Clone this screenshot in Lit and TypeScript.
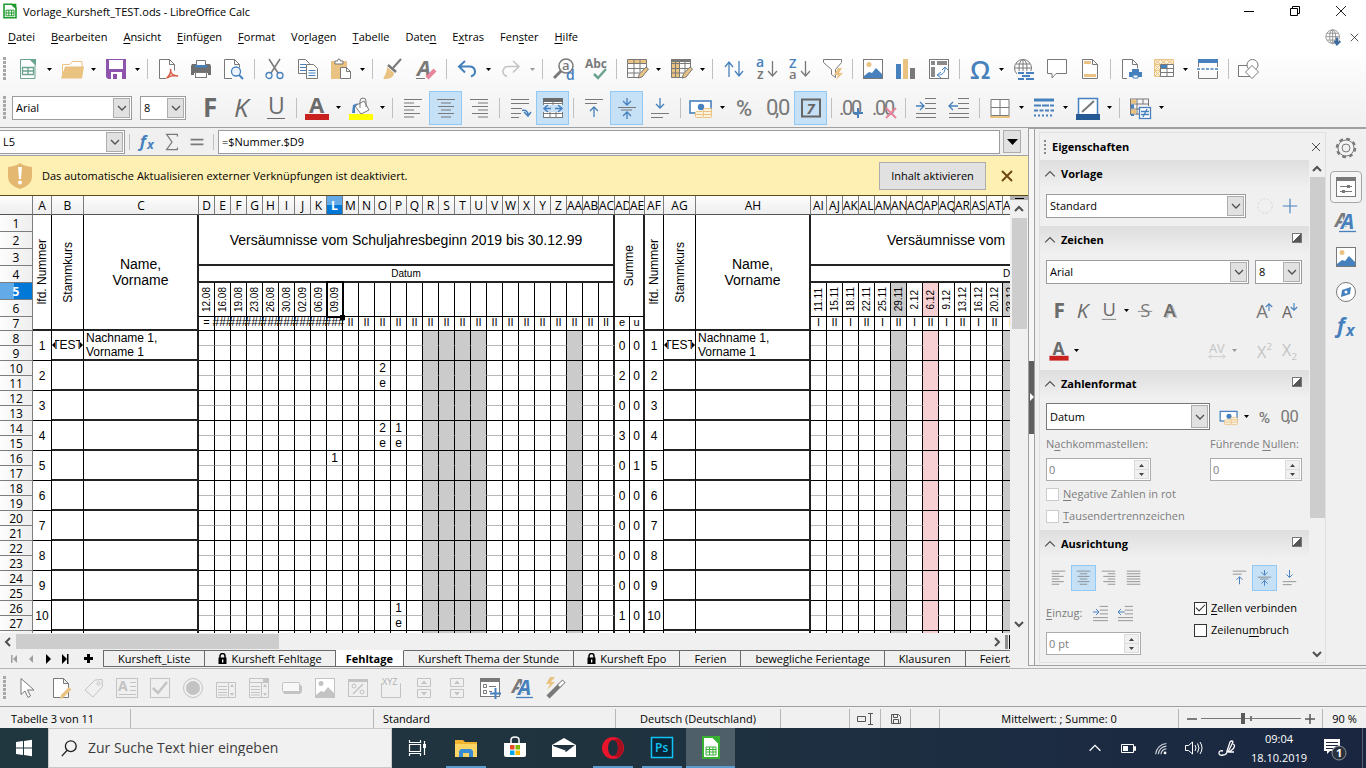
import { LitElement, html, svg, css, nothing } from "lit";
import { customElement, property } from "lit/decorators.js";
import { classMap } from "lit/directives/class-map.js";

const G = "#797979";
const B = "#4680bd";
const T = "#eac282";
const L = "#c3c3c3";

const lines = (ws: number[][], y0: number, step: number, c = G) =>
  ws.map(([a, b], i) => svg`<path d="M${a} ${y0 + i * step + 0.5}H${b}" stroke=${c}/>`);

const A = [[1, 19], [1, 11], [1, 17], [1, 11], [1, 17], [1, 11]];
const C = [[1, 19], [5, 15], [2, 18], [5, 15], [2, 18], [5, 15]];
const R = [[1, 19], [9, 19], [3, 19], [9, 19], [3, 19], [9, 19]];
const J = [[1, 19], [1, 19], [1, 19], [1, 19], [1, 19], [1, 19]];

const fancyA = svg`<g font-family="Open Sans, sans-serif" font-style="italic" font-weight="700"><text x="-1" y="15" font-size="20" fill=${G}>A</text><text x="5" y="17" font-size="21" fill="#f0f0f0" stroke="#f0f0f0" stroke-width="2">A</text><text x="5" y="17" font-size="21" fill=${B}>A</text></g><path d="M3 19.500H20" stroke=${B} stroke-width="1.300"/>`;
const picture = (g: string, b: string, t: string) => svg`<rect x=".5" y=".5" width="19" height="19" fill="#fff" stroke=${g}/><circle cx="6" cy="5.500" r="2.500" fill=${t}/><path d="M1 19V17l5-4 3 1 4-5 6 6v4z" fill=${b}/>`;
const money = svg`<rect x="-1" y="3" width="21" height="12" fill="#fff" stroke=${B} stroke-width="1.600"/><circle cx="10" cy="9" r="3.200" fill=${B}/><g fill="#fbf0dc" stroke=${T}><rect x="12.500" y="10.500" width="8" height="9" rx="1"/><rect x="4.500" y="13.500" width="8" height="6" rx="1"/><path d="M13 13.500h7M13 16.500h7M5 16.500h7" /></g>`;

const ICONS: Record<string, unknown> = {
  new: svg`<path d="M2.500.5H12l5 5V19.500H2.500z" fill="#fff" stroke="#6aa391"/><path d="M11.500 0H18v6.500z" fill="#6aa391"/><path d="M4.500 8.500h11v7h-11zM4.500 12h11M10 8.500v7" fill="none" stroke="#6aa391" stroke-width="1.300"/>`,
  open: svg`<path d="M.5 18V5.500h7l3-3h9.500v6" fill="#fff" stroke=${T}/><path d="M-1 19.500L3 7.500h19l-2 12z" fill=${T}/>`,
  save: svg`<path d="M0 0h20v20H2l-2-2z" fill="#8e54ac"/><rect x="3" y="1" width="14" height="9" fill="#fff"/><path d="M5 20v-7h11v7z" fill="#fff"/><path d="M7 15h4v5H7z" fill="#8e54ac"/>`,
  pdf: svg`<path d="M8 19.500H1.500V.5h10l5 5v6M11.500.5v5h5" fill="#fff" stroke=${G}/><path d="M8.500 19c3-2 5-6 4-9 0 5 2 7 7.500 7-4-1-8 0-11.500 2z" fill="none" stroke="#d85a46" stroke-width="1.500"/>`,
  print: svg`<path d="M5.500 8V1.500h9V8" fill="#fff" stroke=${G}/><path d="M1 5h4v3h10V5h4l1 2v9h-3v-2H3v2H0V7z" fill="#6f6f6f"/><path d="M4 6h12v2.500H4z" fill=${B}/><rect x="4.500" y="13.500" width="11" height="5" fill="#fff" stroke=${G}/>`,
  preview: svg`<path d="M8 19.500H.5V.5h10l5 5v3M10.500.5v5h5" fill="#fff" stroke=${G}/><circle cx="12" cy="12.500" r="4.500" fill="#eef4fb" stroke=${B} stroke-width="1.300"/><path d="M15 16l4 4" stroke=${B} stroke-width="2"/>`,
  cut: svg`<path d="M4 0l9 14M15 0L6 14" stroke=${G} stroke-width="1.500"/><circle cx="4" cy="16.500" r="3" fill="none" stroke=${B} stroke-width="1.300"/><circle cx="15" cy="16.500" r="3" fill="none" stroke=${B} stroke-width="1.300"/>`,
  copy: svg`<path d="M.5.5h7l4 4v10H.5z" fill="#fff" stroke=${G}/><path d="M2 5.500h6M2 8.500h6M2 11.500h6" stroke=${B}/><path d="M8.500 5.500h7l4 4v10h-11z" fill="#fff" stroke=${G}/><path d="M10.500 11.500h7M10.500 14h7M10.500 16.500h7" stroke=${B}/>`,
  paste: svg`<rect x="0" y="2" width="16" height="18" fill=${T}/><path d="M4 5V2h2.500a1.500 2 0 013 0H12v3z" fill="#fff" stroke=${G}/><path d="M9.500 8.500h6l4 4v7h-10z" fill="#fff" stroke=${G}/><path d="M15.500 8.500v4h4" fill="none" stroke=${G}/>`,
  brush: svg`<path d="M18 0l-8 9" stroke=${G} stroke-width="2"/><path d="M5 6l8 7" stroke=${G} stroke-width="2.500"/><path d="M4 8l7 6c0 4-4 6-10 6-2-1 3-4 3-12z" fill=${T}/>`,
  clear: svg`<text x="1" y="17" font-family="Open Sans, sans-serif" font-style="italic" font-weight="700" font-size="22" fill=${G}>A</text><path d="M0 19.500h9" stroke=${G}/><path d="M11 19l8-8" stroke="#e8849b" stroke-width="4"/>`,
  undo: svg`<path d="M8 2L2 7.500l6 6M2 7.500h11a5 5 0 013 9l-2 1" fill="none" stroke=${B} stroke-width="2"/>`,
  redo: svg`<path d="M12 2l6 5.500-6 6M18 7.500H7a5 5 0 00-3 9l2 1" fill="none" stroke=${L} stroke-width="1.500"/>`,
  find: svg`<circle cx="13" cy="7" r="7" fill="none" stroke=${G} stroke-width="1.500"/><path d="M8 12l-7 7" stroke=${G} stroke-width="3"/><g font-family="Open Sans, sans-serif" font-weight="600"><text x="9" y="11" font-size="13" fill=${G}>a</text><text x="13" y="21" font-size="14" fill=${B}>d</text></g>`,
  abc: svg`<text x="-1" y="9" font-family="Open Sans, sans-serif" font-weight="700" font-size="12" fill=${G}>Abc</text><path d="M8 15l4 4 8-9" fill="none" stroke="#6aa391" stroke-width="2.500"/>`,
  rows: svg`<path d="M.5.5h19v4H.5z" fill=${T} stroke=${G}/><path d="M.5 4.500v14h12M19.500 4.500v5M.5 9.500h18M.5 14h13M7 .5v18M13 .5v13" fill="none" stroke=${G}/><path d="M11 19l1.500-4L19 8l2.500 2-6.500 8z" fill=${T} stroke=${G}/>`,
  cols: svg`<path d="M.5.5h8v18h-8z" fill=${T} stroke=${G}/><path d="M8.500.5h11v9M.5 4.500h19M.5 9.500h18M.5 14h13M4.500.5v18M14 .5v13M8.500 18.500h4" fill="none" stroke=${G}/><path d="M0 0h20v3H0z" fill=${G}/><path d="M11 19l1.500-4L19 8l2.500 2-6.500 8z" fill=${T} stroke=${G}/>`,
  sort: svg`<path d="M6 18V3M2 8l4-5 4 5M16 2v15M12 12l4 5 4-5" fill="none" stroke=${B} stroke-width="1.300"/>`,
  az: svg`<g font-family="Open Sans, sans-serif" font-size="14" font-weight="600"><text x="0" y="8" fill=${B}>a</text><text x="1" y="20" fill=${G}>z</text></g><path d="M16.500 2v15M12 12l4.500 5 4.500-5" fill="none" stroke=${G} stroke-width="1.300"/>`,
  za: svg`<g font-family="Open Sans, sans-serif" font-size="13" font-weight="600"><text x="0" y="9" fill=${B}>Z</text><text x="0" y="20" fill=${G}>a</text></g><path d="M16.500 2v15M12 12l4.500 5 4.500-5" fill="none" stroke=${G} stroke-width="1.300"/>`,
  filter: svg`<path d="M1.500.5h18v3l-6 7v8l-4-3v-5l-8-7z" fill="#fff" stroke=${G}/><path d="M16 9l-4 7h4l-2 5 7-7h-4l3-5z" fill=${T}/>`,
  image: picture(G, B, T),
  chart: svg`<path d="M0 5h5v15H0z" fill=${B}/><path d="M7 0h5v20H7z" fill=${T}/><path d="M14 9h5v11h-5z" fill=${G}/>`,
  pivot: svg`<rect x=".5" y=".5" width="19" height="19" fill="#fff" stroke=${G}/><path d="M2 2h4v4H2zM8 2h10v4H8zM2 8h4v10H2z" fill="#8a8a8a"/><path d="M9 16c4 0 7-2 7-7M13 11l3-3 3 3M12 13l-4 3 4 3" fill="none" stroke=${B}/>`,
  omega: svg`<text x="0" y="20" font-family="Open Sans, sans-serif" font-weight="600" font-size="26" fill=${B}>Ω</text>`,
  link: svg`<circle cx="9" cy="9" r="8.500" fill="#fff" stroke=${G}/><ellipse cx="9" cy="9" rx="4" ry="8.500" fill="none" stroke=${G}/><path d="M1 9h16M2 5h14M9 1v12" stroke=${G}/><path d="M3 12h18v8H3z" fill="#f6f6f6"/><path d="M4 14h6M12 14h8M8 17h8M4 20h6M12 20h8" stroke=${B} stroke-width="2"/>`,
  comment: svg`<path d="M.5.5h19v14H9l-4 4.500v-4.500H.5z" fill="#fff" stroke=${G}/>`,
  header: svg`<path d="M2.500.5h10l5 5v14h-15zM12.500.5v5h5" fill="#fff" stroke=${G}/><path d="M4 2h7v3H4zM4 15h12v3H4z" fill=${T}/>`,
  printarea: svg`<path d="M6 19.500H1.500V.5h10l5 5v4M11.500.5v5h5" fill="#fff" stroke=${G}/><path d="M11 10h7v3h3v5H8v-5h3z" fill=${B}/><path d="M12 16h5v3h-5z" fill="#fff" stroke=${B}/>`,
  freeze: svg`<path d="M.5.5h19v5h-13v12h-6z" fill="#fdf0d8" stroke=${T}/><path d="M1 1l5 4M6 1L1 5M7 1l5 4M12 1L7 5M13 1l6 4M18 1l-5 4M1 6l5 5M6 6l-5 5M1 12l5 5M6 12l-5 5M.5 5.500h6M.5 11.500h6" stroke=${T}/><path d="M6.500 5.500h13v12h-13zM13 5.500v12M6.500 9.500h13M6.500 13.500h13" fill="#fff" stroke=${G}/><path d="M7 6h6v3H7z" fill=${B}/>`,
  split: svg`<path d="M0 0h20v4H0z" fill=${B}/><path d="M.5 4v4M19.500 4v4M.5 8M.5 12v7.500h19V12" fill="none" stroke=${G}/><path d="M-1 10h22" stroke=${B} stroke-width="1.300" stroke-dasharray="3 1.500"/>`,
  shapes: svg`<rect x="-.5" y="6.500" width="12" height="11" fill="#fff" stroke=${G}/><circle cx="13.500" cy="6" r="5.500" fill="#fff" stroke=${G}/><path d="M13 6.500l6.500 6.500-6.500 6.500L6.500 13z" fill="#fff" stroke=${G}/>`,
  bold: svg`<text x="3" y="19" font-family="Open Sans, sans-serif" font-weight="700" font-size="26" fill="#6b6b6b">F</text>`,
  italic: svg`<text x="1" y="19" font-family="Open Sans, sans-serif" font-style="italic" font-size="26" fill="#6b6b6b">K</text>`,
  underline: svg`<text x="2" y="16" font-family="Open Sans, sans-serif" font-size="23" fill="#6b6b6b">U</text><path d="M1 20.500h18" stroke="#6b6b6b"/>`,
  strike: svg`<text x="4" y="18" font-family="Open Sans, sans-serif" font-size="23" fill="#7b7b7b">S</text><path d="M1 10.500h18" stroke="#7b7b7b"/>`,
  shadow: svg`<text x="4" y="19" font-family="Open Sans, sans-serif" font-weight="600" font-size="23" fill="#bbb">A</text><text x="2" y="18" font-family="Open Sans, sans-serif" font-weight="600" font-size="23" fill="#6b6b6b">A</text>`,
  fontcolor: svg`<text x="2" y="15" font-family="Open Sans, sans-serif" font-weight="700" font-size="22" fill="#6b6b6b">A</text><path d="M-2 16h24v6H-2z" fill="#c9211e"/>`,
  bucket: svg`<path d="M4 8l9-5 5 9-8 4z" fill="#fff" stroke=${G}/><path d="M9 10V3a3 3 0 016 0v6" fill="none" stroke=${G}/><path d="M2 7l5-2-3 4v6H1z" fill=${B}/><path d="M-2 16h24v6H-2z" fill="#ff0"/>`,
  left: lines(A, 1, 3.5), center: lines(C, 1, 3.5), right: lines(R, 1, 3.5), justify: lines(J, 1, 3.5),
  wrap: svg`<path d="M1 1.500h18M1 5.500h18M1 10.500h11M1 15.500h10M1 19.500h8" stroke=${G}/><path d="M12 12.500c4-1 6 1 6 5M14 14l4 4 3-4" fill="none" stroke=${B} stroke-width="1.500"/>`,
  merge: svg`<rect x=".5" y=".5" width="19" height="19" fill="#fff" stroke=${G}/><path d="M0 0h20v4H0z" fill="#6b6b6b"/><path d="M0 5.500h20M0 15.500h20M10 4v3M7 14v5M13 14v5" stroke=${G}/><path d="M0 7h20v7H0z" fill="#c7e0f5"/><path d="M1 10.500h7M12 10.500h7M5 7l-4 3.500L5 14M15 7l4 3.500-4 3.500" fill="none" stroke=${B} stroke-width="1.500"/>`,
  top: svg`<path d="M1 1.500h18M1 5.500h12" stroke=${G}/><path d="M10 19V9M6 13l4-4 4 4" fill="none" stroke=${B} stroke-width="1.300"/>`,
  middle: svg`<path d="M1 9.500h18M4 12h11" stroke=${G}/><path d="M10 0v7M6 3l4 4 4-4M10 21v-7M6 18l4-4 4 4" fill="none" stroke=${B} stroke-width="1.300"/>`,
  bottom: svg`<path d="M1 15.500h18M1 19.500h12" stroke=${G}/><path d="M10 0v10M6 6l4 4 4-4" fill="none" stroke=${B} stroke-width="1.300"/>`,
  money,
  percent: svg`<text x="1" y="18" font-family="Roboto, sans-serif" font-weight="500" font-size="22" fill=${G}>%</text>`,
  number: svg`<text x="-2 7 10" y="17" font-family="Roboto, sans-serif" font-size="22" fill=${G}>0,0</text>`,
  date: svg`<rect x="1" y="1.500" width="18" height="17" fill="none" stroke="#666" stroke-width="2"/><text x="5.500" y="15.500" font-family="Open Sans, sans-serif" font-weight="700" font-style="italic" font-size="15" fill="#666">7</text>`,
  adddec: svg`<text x="-3 0 9" y="17" font-family="Roboto, sans-serif" font-size="20" fill=${G}>.00</text><path d="M16 10v10M11 15h10" stroke=${B} stroke-width="2"/>`,
  deldec: svg`<text x="-3 0 9" y="17" font-family="Roboto, sans-serif" font-size="20" fill=${G}>.00</text><path d="M11 10l10 10M21 10L11 20" stroke="#e8849b" stroke-width="2"/>`,
  indent: svg`<path d="M9 .5h11M9 5.500h11M9 10.500h11M0 15.500h20M0 19.500h20" stroke=${G}/><path d="M0 8h8M4 4l4 4-4 4" fill="none" stroke=${B} stroke-width="1.300"/>`,
  outdent: svg`<path d="M9 .5h11M9 5.500h11M9 10.500h11M0 15.500h20M0 19.500h20" stroke=${G}/><path d="M0 8h9M4 4L0 8l4 4" fill="none" stroke=${B} stroke-width="1.300"/>`,
  borders: svg`<path d="M1 1.500h18v16H1zM10 1.500v16M1 9.500h18" fill="#fff" stroke=${G}/><path d="M0 19h20" stroke=${T} stroke-width="2"/>`,
  linestyle: svg`<path d="M0 2h20" stroke=${B} stroke-width="3"/><path d="M0 7.500h20" stroke=${B} stroke-width="2" stroke-dasharray="7 1"/><path d="M0 12.500h20" stroke=${B} stroke-width="2" stroke-dasharray="4 1.500"/><path d="M0 17.500h20" stroke=${B} stroke-width="2" stroke-dasharray="2 2"/>`,
  linecolor: svg`<rect x=".5" y=".5" width="19" height="17" fill="#fff" stroke=${B} stroke-width="1.500"/><path d="M4 14L16 3" stroke=${G} stroke-width="2"/><path d="M-2 16h24v6H-2z" fill="#265a94"/>`,
  cond: svg`<path d="M0 1h19M0 6h19M0 11h9M0 16h9M.5 1v16M7 1v16M13 1v5M18.500 1v7" stroke=${G}/><path d="M1 1.500h5v4H1zM1 11.500h5v4H1z" fill=${T}/><path d="M1 6.500h3v4H1zM1 16h3v2H1z" fill=${B}/><rect x="9.500" y="9.500" width="11" height="11" fill="#fff" stroke=${B} stroke-width="1.300"/><path d="M11 13.500h8M11 16.500h8M17 11l-4 8" stroke=${B} stroke-width="1.300"/>`,
  // form controls
  pointer: svg`<path d="M3 .5v16l4-3.500 3 6.500 2.500-1.500-3-6H16z" fill="#fff" stroke=${G}/>`,
  design: svg`<path d="M2.500.5h10l5 5v14h-15zM12.500.5v5h5" fill="#fff" stroke=${G}/><path d="M9 21l1-4 8-8 2.500 2.500-8 8z" fill=${T}/>`,
  tag: svg`<path d="M1 12L11 2l7-.5.5 7L9 19z" fill="none" stroke=${L}/><circle cx="14.500" cy="5.500" r="1.500" fill="none" stroke=${L}/>`,
  textbox: svg`<rect x="-.5" y=".5" width="21" height="19" fill="none" stroke=${L}/><text x="1" y="13" font-family="Open Sans, sans-serif" font-weight="700" font-size="14" fill=${L}>A</text><path d="M13 4.500h6M13 8.500h6M13 12.500h6M2 16.500h17" stroke=${L}/>`,
  check: svg`<rect x=".5" y=".5" width="19" height="19" fill="none" stroke=${L}/><path d="M3 10l5 5L17 4" fill="none" stroke=${L} stroke-width="2.500"/>`,
  radio: svg`<circle cx="10" cy="10" r="9.500" fill="none" stroke=${L}/><circle cx="10" cy="10" r="7" fill=${L}/>`,
  list: svg`<path d="M.5 4.500h19v15H.5zM12.500 4.500v15M2 8.500h9M2 11.500h9M2 14.500h9M2 17h9" fill="none" stroke=${L}/><path d="M14 9h4l-2-3zM14 15h4l-2 3z" fill=${L}/>`,
  combo: svg`<path d="M.5.5h19v4H.5zM.5 4.500v15h19v-15M12.500 4.500v15M2 8.500h9M2 11.500h9M2 14.500h9M2 17h9" fill="none" stroke=${L}/><path d="M14 0h6v4h-6zM14 9h4l-2-3zM14 15h4l-2 3z" fill=${L}/>`,
  push: svg`<path d="M2 6h15l3 2v6l-2 2H2l-1-2z" fill=${L}/><rect x=".5" y="4.500" width="17" height="9" rx="1" fill="#f7f7f7" stroke=${L}/>`,
  imgbtn: picture(L, L, L),
  format: svg`<rect x=".5" y="1.500" width="19" height="17" fill="none" stroke=${L}/><path d="M0 1h20v3H0z" fill=${L}/><path d="M5 16l10-10" stroke=${L} stroke-width="1.500"/><circle cx="6" cy="8" r="2" fill="none" stroke=${L}/><circle cx="14" cy="14" r="2" fill="none" stroke=${L}/>`,
  group: svg`<path d="M1 5.500H.5v14h19v-14H19" fill="none" stroke=${L}/><text x="1" y="7" font-family="Open Sans, sans-serif" font-size="9" fill="#b0b0b0">XYZ</text>`,
  spin: svg`<path d="M3.500.5h13v8h-13zM3.500 11.500h13v8h-13z" fill="none" stroke=${L}/><path d="M7 6h6l-3-3.500zM7 14h6l-3 3.500z" fill=${L}/>`,
  scroll: svg`<path d="M3.500.5h13v8h-13zM3.500 11.500h13v8h-13z" fill="none" stroke=${L}/><path d="M7 6h6l-3-3.500zM7 14h6l-3 3.500z" fill=${L}/>`,
  addfield: svg`<rect x=".5" y="1.500" width="19" height="17" fill="#fff" stroke=${G}/><path d="M0 0h20v4H0z" fill=${G}/><path d="M3.500 6.500h3v3h-3zM3.500 12.500h3v3h-3zM9 8.500h7M9 13.500h3" fill="none" stroke=${G}/><path d="M15.500 10v11M10 15.500h11" stroke=${B} stroke-width="2"/>`,
  styles: fancyA,
  wizard: svg`<path d="M4-1L0 6h4l-3 6 8-8H5l4-5z" fill=${T}/><path d="M2 19L14 7" stroke=${G} stroke-width="4.500"/><path d="M13 8l5-5" stroke=${G} stroke-width="4.500"/><path d="M13 8l4.500-4.500" stroke="#fff" stroke-width="2.500"/>`,
  // sidebar
  grow: svg`<text x="-1" y="19" font-family="Open Sans, sans-serif" font-size="23" fill=${G}>A</text><path d="M15 10V1M11 5l4-4 4 4" fill="none" stroke=${B} stroke-width="1.400"/>`,
  shrink: svg`<text x="0" y="19" font-family="Open Sans, sans-serif" font-size="20" fill="#666">A</text><path d="M15 0v8M11 5l4 4 4-4" fill="none" stroke=${B} stroke-width="1.400"/>`,
  spacing: svg`<text x="0" y="13" font-family="Open Sans, sans-serif" font-size="16" fill=${L}>AV</text><path d="M0 17h20M3 14l-3 3 3 3M17 14l3 3-3 3" fill="none" stroke=${L}/>`,
  sup: svg`<text x="0" y="19" font-family="Open Sans, sans-serif" font-size="20" fill=${L}>X</text><text x="12" y="9" font-family="Open Sans, sans-serif" font-size="12" fill=${L}>2</text>`,
  sub: svg`<text x="0" y="16" font-family="Open Sans, sans-serif" font-size="20" fill=${L}>X</text><text x="12" y="21" font-family="Open Sans, sans-serif" font-size="12" fill=${L}>2</text>`,
  fill: svg`<circle cx="10" cy="10" r="9" fill="none" stroke="#cfcfcf" stroke-dasharray="3 2"/>`,
  plus: svg`<path d="M10 1v18M1 10h18" stroke=${B} stroke-width="1.400"/>`,
  gear: svg`<circle cx="10" cy="10" r="9" fill="none" stroke=${G} stroke-width="2.500" stroke-dasharray="3.700 3.368"/><circle cx="10" cy="10" r="8" fill="#f4f4f4" stroke=${G}/><circle cx="10" cy="10" r="4" fill="#f0f0f0" stroke=${G}/>`,
  props: svg`<rect x=".5" y=".5" width="19" height="19" fill="#fff" stroke=${G}/><path d="M0 0h20v4H0z" fill=${G}/><path d="M4 9.500h12M4 14.500h12" stroke=${G}/><path d="M11 8h3v3h-3zM6 13h3v3H6z" fill=${G}/>`,
  compass: svg`<circle cx="10" cy="10" r="9.500" fill="#fff" stroke=${G}/><path d="M6 8l9-3-1 7-9 3z" fill=${B}/><circle cx="10" cy="10" r="1.500" fill="#fff"/>`,
  fx: svg`<text x="1" y="16" font-family="Open Sans, sans-serif" font-style="italic" font-weight="700" font-size="21" fill=${B}>f</text><text x="10" y="19" font-family="Open Sans, sans-serif" font-style="italic" font-weight="700" font-size="16" fill=${B}>x</text>`,
  sum: svg`<path d="M16 4V1.500H4l6 8.500-6 8.500h12V16" fill="none" stroke=${G} stroke-width="1.400"/>`,
  equals: svg`<path d="M2 7h16M2 13h16" stroke=${G} stroke-width="2"/>`,
  sheet: svg`<path d="M2.500 1.500H12l5.500 5v12h-15z" fill="#fff" stroke="#1d9b2c" stroke-width="2"/><path d="M11.500 1L18 1v6z" fill="#1d9b2c"/><path d="M5 9h10v7H5zM5 12.500h10M8.500 9v7M12 9v7" fill="none" stroke="#1d9b2c" stroke-width="1.200"/>`,
  globe: svg`<circle cx="9" cy="9" r="8" fill="#fff" stroke="#8a8a8a"/><ellipse cx="9" cy="9" rx="3.500" ry="8" fill="none" stroke="#8a8a8a"/><path d="M1 9h16M2.500 5h13M2.500 13h13M9 1v16" stroke="#8a8a8a"/><path d="M14 10v7M11 14l3 4 4-4" fill="none" stroke="#3c6a9c" stroke-width="2.500"/>`,
  min: svg`<path d="M5 10.500h10" stroke="#000"/>`,
  restore: svg`<path d="M5.500 7.500h7v7h-7zM7.500 7.500v-2h7v7h-2" fill="none" stroke="#000"/>`,
  close: svg`<path d="M5 5l10 10M15 5L5 15" stroke="#222"/>`,
  shield: svg`<path d="M-2 1Q6 0 10-3q4 3 12 4v10q0 8-12 12Q-2 19-2 11z" fill="#e5b872"/><path d="M8 1h4l-1 12H9z" fill="#fff"/><circle cx="10" cy="16.500" r="2" fill="#fff"/>`,
  // taskbar
  win: svg`<path d="M2 4l7-1v6.500H2zM10 3l8-1.200v7.700h-8zM2 10.500h7V17l-7-1zM10 10.500h8v7.700L10 17z" fill="#fff"/>`,
  search: svg`<circle cx="12" cy="8" r="6" fill="none" stroke="#222" stroke-width="1.500"/><path d="M8 12.500L2 19" stroke="#222" stroke-width="1.500"/>`,
  tasks: svg`<path d="M2.500 6.500h11v7h-11zM2.500 2v2.500h11V2M2.500 18v-2.500h11V18M17.500 3v14" fill="none" stroke="#fff" stroke-width="1.200"/><path d="M16 6h3v4h-3z" fill="#fff"/>`,
  explorer: svg`<path d="M-1 2h8l2 2h12v15H-1z" fill="#f0b430"/><path d="M-1 6h22v13H-1z" fill="#fbd665"/><path d="M3 19v-6l2-2h10l2 2v6h-4v-4H7v4z" fill="#3a8bd6"/>`,
  store: svg`<path d="M-1 5h22v12q0 2-2 2H1q-2 0-2-2z" fill="#fff"/><path d="M6 5V2q0-3 4-3t4 3v3" fill="none" stroke="#fff" stroke-width="1.500"/><path d="M5 7h4.500v4.500H5z" fill="#e84b25"/><path d="M10.500 7H15v4.500h-4.500z" fill="#7fba00"/><path d="M5 12.500h4.500V17H5z" fill="#00a4ef"/><path d="M10.500 12.500H15V17h-4.500z" fill="#ffb900"/>`,
  mail: svg`<path d="M-2 7L10 0l12 7v12H-2z" fill="#fff"/><path d="M-1 7l22 0-9 7-2-2-11-4z" fill="#1f333f"/><path d="M-1 7.500L9 13l3-1.500L10 14z" fill="#fff"/>`,
  opera: svg`<ellipse cx="10" cy="10" rx="11" ry="11" fill="#e8152b"/><ellipse cx="10" cy="10" rx="5" ry="8" fill="#1f303d"/><path d="M17 2a11 11 0 010 16q-3 2-6 0 4-2 4-8t-4-8q3-2 6 0z" fill="#a70f1f"/>`,
  ps: svg`<rect x="-.5" y="-.5" width="21" height="20" fill="#0a2536" stroke="#12c4f5" stroke-width="1.500"/><text x="3" y="14" font-family="Open Sans, sans-serif" font-weight="600" font-size="12" fill="#12c4f5">Ps</text>`,
  calc: svg`<path d="M2-1h10l6 6v15H2z" fill="#fff" stroke="#37b034" stroke-width="2"/><path d="M12-2h7v7z" fill="#37b034"/><path d="M5 9h10v8H5zM5 11.500h10M5 14h10M8.500 9v8M12 9v8" fill="none" stroke="#37b034"/>`,
  up: svg`<path d="M4 13l6-6 6 6" fill="none" stroke="#fff" stroke-width="1.400"/>`,
  battery: svg`<path d="M3.500 6.500h12v8h-12zM16.500 8.500h1v4h-1z" fill="none" stroke="#fff"/><path d="M5 8h5v5H5z" fill="#fff"/>`,
  wifi: svg`<path d="M4 17A13 13 0 0116 5M7 17a9.500 9.500 0 019-9M10 17a6 6 0 016-6" fill="none" stroke="#cdd3d9" stroke-width="1.300"/><circle cx="14.500" cy="15.500" r="1.500" fill="#fff"/>`,
  volume: svg`<path d="M1.500 7.500h3l4-3.500v12l-4-3.500h-3z" fill="none" stroke="#fff"/><path d="M11 7q2 3 0 6M13.500 5.500q3 4.500 0 9M16 4q4 6 0 12" fill="none" stroke="#fff"/>`,
  pen: svg`<path d="M6 13q-4-1-4 2t4 2q4 0 4-4L13 4q2-2 3 0l-5 10M16 6q3 1 0 5l-4 3h5" fill="none" stroke="#fff" stroke-width="1.300"/>`,
  note: svg`<path d="M1 1h16v12H7l-3 3v-3H1z" fill="#fff"/><path d="M3 4.500h12M3 7.500h12M3 10.500h7" stroke="#1b2940"/><circle cx="16" cy="15" r="7" fill="#2a323e" stroke="#8b929b"/><text x="13" y="19" font-family="Open Sans, sans-serif" font-weight="700" font-size="11" fill="#fff">1</text>`,
};

const glyph = (name: string, size = 20) =>
  html`<svg class="ico" viewBox="0 0 20 20" width=${size} height=${size} aria-hidden="true">${ICONS[name]}</svg>`;

const arrow = (label: string, dim = false) =>
  html`<button class=${classMap({ drop: true, dim })} aria-label=${label + " – Auswahl"}><svg viewBox="0 0 5 3" width="5" height="3"><path d="M0 0h5L2.500 3z" fill="currentColor"/></svg></button>`;

const chevron = (rot = 0, size = 10, w = 1.3) =>
  html`<svg class="chev" viewBox="0 0 10 10" width=${size} height=${size}><path d="M1 3l4 4 4-4" transform="rotate(${rot} 5 5)" fill="none" stroke="#505050" stroke-width=${w}/></svg>`;

const base = css`
  :host { display: block; font-family: "Open Sans", "Noto Sans", sans-serif; font-size: 11px; line-height: 16px; color: #000; }
  * { box-sizing: border-box; }
  button, input, select { font: inherit; color: inherit; margin: 0; border-radius: 0; }
  button { border: 0; padding: 0; background: none; display: inline-flex; align-items: center; justify-content: center; }
  u { text-underline-offset: 2px; }
  .ico { display: block; overflow: visible; flex: none; }
  .chev { display: block; }
  .drop { width: 11px; align-self: stretch; color: #000; }
  .drop.dim { color: #999; }
  .combo { display: grid; align-items: stretch; background: #fff; border: 1px solid #9c9ca0; }
  .combo > * { grid-area: 1 / 1; }
  .combo select { appearance: none; border: 0; background: none; padding: 0 20px 0 3px; width: 100%; outline: 0; min-width: 0; }
  .combo .cb { justify-self: end; width: 17px; margin: 1px; background: #e1e1e1; border: 1px solid #adadad; display: flex; align-items: center; justify-content: center; pointer-events: none; }
`;

const combo = (label: string, value: string, cls: string) => html`
  <span class="combo ${cls}"><select aria-label=${label}><option>${value}</option></select><span class="cb">${chevron()}</span></span>`;

type Tool = [string, string, string?] | "|";

@customElement("tool-bar")
class ToolBar extends LitElement {
  @property({ attribute: false }) items: Tool[] = [];
  static styles = [base, css`
    :host { display: flex; align-items: center; min-width: 0; }
    .btn { width: 33px; height: 34px; border: 1px solid transparent; flex: none; }
    .btn.on { background: #c6e0f6; border-color: #90c8f6; }
    .drop { align-self: auto; height: 34px; flex: none; }
    .sep { width: 8px; display: flex; justify-content: center; flex: none; }
    .sep::before { content: ""; width: 1px; height: 20px; background: #c0c0c0; }
  `];
  render() {
    return this.items.map((t) => t === "|"
      ? html`<span class="sep"></span>`
      : html`<button class=${classMap({ btn: true, on: !!t[2]?.includes("on") })} aria-label=${t[1]} title=${t[1]}>${glyph(t[0])}</button>${t[2]?.includes("v") ? arrow(t[1], t[2].includes("dim")) : nothing}`);
  }
}

const STANDARD: Tool[] = [
  ["new", "Neu", "v"], ["open", "Öffnen", "v"], ["save", "Speichern", "v"], "|",
  ["pdf", "Als PDF exportieren"], ["print", "Drucken"], ["preview", "Druckvorschau"], "|",
  ["cut", "Ausschneiden"], ["copy", "Kopieren"], ["paste", "Einfügen", "v"], "|",
  ["brush", "Format übertragen"], ["clear", "Direkte Formatierung löschen"], "|",
  ["undo", "Rückgängig", "v"], ["redo", "Wiederherstellen", "v dim"], "|",
  ["find", "Suchen und Ersetzen"], ["abc", "Rechtschreibung"], "|",
  ["rows", "Zeile", "v"], ["cols", "Spalte", "v"], "|",
  ["sort", "Sortieren"], ["az", "Aufsteigend sortieren"], ["za", "Absteigend sortieren"], ["filter", "AutoFilter"], "|",
  ["image", "Bild"], ["chart", "Diagramm"], ["pivot", "Pivot-Tabelle"], "|",
  ["omega", "Sonderzeichen", "v"], ["link", "Hyperlink"], ["comment", "Kommentar"], ["header", "Kopf- und Fußzeilen"], "|",
  ["printarea", "Druckbereich"], ["freeze", "Zeilen und Spalten fixieren", "v"], ["split", "Fenster teilen"], "|",
  ["shapes", "Zeichnungsfunktionen"],
];
const FORMAT: Tool[] = [
  ["bold", "Fett"], ["italic", "Kursiv"], ["underline", "Unterstrichen"], "|",
  ["fontcolor", "Schriftfarbe", "v"], ["bucket", "Hintergrundfarbe", "v"], "|",
  ["left", "Linksbündig"], ["center", "Zentriert", "on"], ["right", "Rechtsbündig"], "|",
  ["wrap", "Zeilenumbruch"], ["merge", "Zellen verbinden", "on"], "|",
  ["top", "Oben"], ["middle", "Mitte", "on"], ["bottom", "Unten"], "|",
  ["money", "Währung", "v"], ["percent", "Prozent"], ["number", "Zahl"], ["date", "Datum", "on"], "|",
  ["adddec", "Nachkommastelle hinzufügen"], ["deldec", "Nachkommastelle löschen"], "|",
  ["indent", "Einzug erhöhen"], ["outdent", "Einzug verringern"], "|",
  ["borders", "Umrandung", "v"], ["linestyle", "Rahmenstil", "v"], ["linecolor", "Rahmenfarbe", "v"], "|",
  ["cond", "Bedingte Formatierung", "v"],
];
const FORM: Tool[] = [
  ["pointer", "Auswahl"], ["design", "Entwurfsmodus"], ["tag", "Beschriftung"], ["textbox", "Textfeld"], ["check", "Markierfeld"],
  ["radio", "Optionsfeld"], ["list", "Listenfeld"], ["combo", "Kombinationsfeld"], ["push", "Schaltfläche"], ["imgbtn", "Grafische Schaltfläche"],
  ["format", "Formatiertes Feld"], ["group", "Gruppierungsrahmen"], ["spin", "Drehfeld"], ["scroll", "Bildlaufleiste"],
  ["addfield", "Feld hinzufügen"], ["styles", "Formularentwurf"], ["wizard", "Assistent"],
];

const colName = (i: number) => (i < 26 ? "" : "A") + String.fromCharCode(65 + (i % 26));
const colKind = (i: number) => {
  if (i === 0 || i === 31) return "c19";
  if (i === 1 || i === 32) return "c32";
  if (i === 2 || i === 33) return "c115";
  if (i === 29 || i === 30) return "c15";
  return "c16";
};
const COLS = Array.from({ length: 47 }, (_, i) => i);
const DATES1 = ["12.08", "16.08", "19.08", "23.08", "26.08", "30.08", "02.09", "06.09", "09.09"];
const DATES2 = ["11.11", "15.11", "18.11", "22.11", "25.11", "29.11", "2.12", "6.12", "9.12", "13.12", "16.12", "20.12", "23.12"];
const MARKS: Record<string, string> = { "10:14": "2", "11:14": "e", "14:14": "2", "15:14": "e", "14:15": "1", "15:15": "e", "16:11": "1", "26:15": "1", "27:15": "e" };
const SUMS = [[0, 0], [2, 0], [0, 0], [3, 0], [0, 1], [0, 0], [0, 0], [0, 0], [0, 0], [1, 0]];
const shade = (i: number) => ((i >= 17 && i <= 20) || i === 26 || i === 39 || i === 46 ? "grey" : i === 41 ? "pink" : "");

@customElement("calc-sheet")
class CalcSheet extends LitElement {
  static styles = [base, css`
    :host { display: block; overflow: hidden; background: #fff; min-width: 0; min-height: 0; }
    table { border-collapse: separate; border-spacing: 0; table-layout: fixed; width: 1019px; font-family: "Liberation Sans", Arial, sans-serif; font-size: 12px; line-height: 14px; }
    .h { width: 33px; } .c19 { width: 19px; } .c32 { width: 32px; } .c115 { width: 115px; } .c15 { width: 15px; } .c16 { width: 16px; }
    th, td { padding: 0; text-align: center; vertical-align: middle; white-space: nowrap; border: 0 solid #000; border-width: 0 1px 1px 0; }
    thead tr { height: 19px; }
    thead th, .rh { font-family: "Open Sans", "Noto Sans", sans-serif; font-weight: 400; background: #f3f3f3; border-color: #7d7d7d; overflow: hidden; line-height: 13px; }
    thead th { background: linear-gradient(#fdfdfd, #eee); border-bottom-color: #555; }
    .rh { background: linear-gradient(90deg, #fdfdfd, #eee); }
    thead .cur { background: linear-gradient(#62aae8 50%, #0078d7 50%); color: #fff; font-weight: 700; }
    .rh.cur { background: linear-gradient(90deg, #62aae8 45%, #0078d7 45%); color: #fff; font-weight: 700; }
    .r17 { height: 17px; } .r14 { height: 14px; } .r15 { height: 15px; }
    .tr { border-right-width: 2px; border-right-color: #222; }
    .tb { border-bottom-width: 2px; border-bottom-color: #222; }
    .soft { border-bottom-color: #b8b8b8; }
    .grey { background: #cbcbcb; } .pink { background: #f7d0d4; }
    .soft.grey { border-bottom-color: #cbcbcb; } .soft.pink { border-bottom-color: #f7d0d4; }
    .big { font-size: 14px; line-height: 16px; }
    .small { font-size: 10px; line-height: 12px; }
    .cut { text-align: left; padding-left: 76px; overflow: hidden; }
    .cut.small { padding-left: 192px; }
    .v { writing-mode: vertical-rl; transform: rotate(180deg); display: inline-block; vertical-align: middle; }
    .v.small { line-height: 12px; }
    .name { text-align: left; padding-left: 2px; }
    .mini { line-height: 10px; vertical-align: top; font-size: 11px; }
    .hash { font-size: 12px; overflow: visible; }
    .hash span { display: flex; justify-content: center; }
    .sel { position: relative; }
    .sel::before { content: ""; position: absolute; inset: -2px -2px -2px -1px; border: 2px solid #000; }
    .sel::after { content: ""; position: absolute; right: -3px; bottom: -4px; width: 5px; height: 5px; background: #000; }
    .clip { display: flex; justify-content: space-between; align-items: center; overflow: hidden; }
    .clip span { flex: 1; display: flex; justify-content: center; min-width: 0; overflow: hidden; }
    .tri { width: 3px; height: 6px; background: #000; clip-path: polygon(0 50%, 100% 0, 100% 100%); flex: none; }
    .tri.r { clip-path: polygon(0 0, 100% 50%, 0 100%); }
  `];
  private rh(n: number, cls: string) {
    return html`<th scope="row" class="rh ${cls} ${n === 5 ? "cur" : ""}">${n < 28 ? n : nothing}</th>`;
  }
  private head(side: number) {
    return html`
      <td rowspan="7" class="tb"><span class="v">lfd. Nummer</span></td>
      <td rowspan="7" class="tb"><span class="v">Stammkurs</span></td>
      <td rowspan="7" class="tb tr big">Name,<br />Vorname</td>
      ${side ? html`<td rowspan="3" colspan="13" class="tb big cut">Versäumnisse vom</td>`
        : html`<td rowspan="3" colspan="26" class="tb tr big">Versäumnisse vom Schuljahresbeginn 2019 bis 30.12.99</td><td rowspan="6" colspan="2" class="tr"><span class="v">Summe</span></td>`}`;
  }
  private top() {
    return html`
      <tr class="r17">${this.rh(1, "")}${this.head(0)}${this.head(1)}</tr>
      <tr class="r17">${this.rh(2, "")}</tr>
      <tr class="r17">${this.rh(3, "")}</tr>
      <tr class="r17">${this.rh(4, "")}<td colspan="26" class="small tb tr">Datum</td><td colspan="13" class="small tb cut">Datum</td></tr>
      <tr class="r17">${this.rh(5, "")}
        ${Array.from({ length: 26 }, (_, k) => html`<td rowspan="2" class="small ${k === 8 ? "sel" : ""} ${k === 25 ? "tr" : ""}">${DATES1[k] ? html`<span class="v small">${DATES1[k]}</span>` : nothing}</td>`)}
        ${DATES2.map((d, k) => html`<td rowspan="2" class="small ${shade(34 + k)}"><span class="v small">${d}</span></td>`)}
      </tr>
      <tr class="r17">${this.rh(6, "")}</tr>
      <tr class="r14">${this.rh(7, "")}
        ${Array.from({ length: 26 }, (_, k) => html`<td class="mini ${k > 0 && k < 9 ? "hash" : ""} ${k === 25 ? "tr" : ""}">${k === 0 ? "=" : k < 9 ? html`<span>###</span>` : "II"}</td>`)}
        <td class="mini">e</td><td class="mini tr">u</td>
        ${DATES2.map((_, k) => html`<td class="mini">${k % 2 ? "II" : "I"}</td>`)}
      </tr>`;
  }
  private cells(row: number, from: number, to: number, cls: string) {
    return COLS.slice(from, to).map((c) => html`<td class="${cls} ${shade(c)} ${c === 28 ? "tr" : ""}">${MARKS[row + ":" + c] ?? nothing}</td>`);
  }
  private person(k: number) {
    const r = 8 + 2 * k;
    const kurs = html`<td rowspan="2" class="tb">${k === 0 ? html`<div class="clip"><i class="tri"></i><span>TEST</span><i class="tri r"></i></div>` : nothing}</td>`;
    const name = html`<td rowspan="2" class="tb tr name">${k === 0 ? html`Nachname 1,<br />Vorname 1` : nothing}</td>`;
    return html`
      <tr class="r15">${this.rh(r, "")}<td rowspan="2">${k + 1}</td>${kurs}${name}${this.cells(r, 3, 29, "soft")}
        <td rowspan="2">${SUMS[k][0]}</td><td rowspan="2" class="tr">${SUMS[k][1]}</td>
        <td rowspan="2">${k + 1}</td>${kurs}${name}${this.cells(r, 34, 47, "soft")}</tr>
      <tr class="r15">${this.rh(r + 1, "")}${this.cells(r + 1, 3, 29, "")}${this.cells(r + 1, 34, 47, "")}</tr>`;
  }
  render() {
    return html`<table aria-label="Fehltage">
      <colgroup><col class="h" />${COLS.map((i) => html`<col class=${colKind(i)} />`)}</colgroup>
      <thead><tr><th></th>${COLS.map((i) => html`<th scope="col" class=${i === 11 ? "cur" : ""}>${colName(i)}</th>`)}</tr></thead>
      <tbody>${this.top()}${SUMS.map((_, k) => this.person(k))}
        <tr class="r15">${this.rh(28, "")}${COLS.map((c) => html`<td class="${shade(c)} ${[2, 28, 30, 33].includes(c) ? "tr" : ""}"></td>`)}</tr>
      </tbody></table>`;
  }
}

@customElement("side-panel")
class SidePanel extends LitElement {
  static styles = [base, css`
    :host { display: flex; min-height: 0; overflow: hidden; background: #f0f0f0; border: 1px solid #a0a0a0; border-width: 1px 0; margin-bottom: 1px; }
    .split { width: 7px; border: 1px solid #a0a0a0; border-width: 0 1px; background: #f6f6f6; display: flex; flex-direction: column; justify-content: center; }
    .handle { height: 73px; background: #5f5f5f; display: flex; align-items: center; justify-content: center; }
    .deck { flex: 1; min-width: 0; margin: 3px 0 2px 4px; border: 1px solid #e0e0e0; display: flex; flex-direction: column; }
    .title { height: 27px; padding: 0 1px 0 4px; display: flex; align-items: center; gap: 6px; font-weight: 700; flex: none; }
    .title .t { flex: 1; }
    .title .dots { border-left: 2px dotted #888; height: 14px; }
    .body { flex: 1; min-height: 0; display: flex; }
    .panels { flex: 1; min-width: 0; overflow: hidden; }
    .sb { width: 16px; background: #f0f0f0; display: flex; flex-direction: column; align-items: center; }
    .sb button { height: 17px; width: 100%; flex: none; }
    .thumb { width: 15px; flex: 342; background: #cdcdcd; }
    .rest { flex: 127; }
    h2 { margin: 0; height: 28px; padding: 0 7px 0 4px; font-size: 11px; font-weight: 700; background: linear-gradient(#dedede, #f0f0f0); display: flex; align-items: center; gap: 5px; }
    h2 .t { flex: 1; }
    .launch { width: 10px; height: 10px; border: 1px solid #777; background: linear-gradient(135deg, #fff 45%, #555 45%); margin-bottom: 4px; }
    section { padding: 0 7px 0 6px; display: flex; flex-direction: column; }
    .row { display: flex; align-items: center; }
    .vorlage { padding-top: 5px; padding-bottom: 7px; }
    .zeichen { padding-top: 6px; padding-bottom: 4px; }
    .zahl { padding-top: 5px; padding-bottom: 3px; }
    .icon { width: 25px; height: 26px; flex: none; border: 1px solid transparent; }
    .icon.on { background: #c6e0f6; border-color: #90c8f6; }
    .grow { flex: 1; }
    .combo { height: 24px; }
    .wide { flex: 1; } .tall { height: 27px; width: 165px; border-color: #777; } .size { width: 47px; margin-left: 6px; }
    .gap { width: 6px; }
    .dis { color: #7d7d7d; }
    .two { justify-content: space-between; height: 28px; }
    .two.spins { height: 23px; margin-bottom: 2px; }
    .two .fn { width: 92px; }
    .spin { display: flex; height: 23px; width: 105px; background: #fff; border: 1px solid #ababab; color: #7d7d7d; }
    .spin.n { width: 92px; } .spin.m { width: 95px; }
    .spin input { flex: 1; min-width: 0; border: 0; padding: 0 2px; background: none; }
    .arrows { width: 15px; margin: 1px; display: flex; flex-direction: column; background: #f0f0f0; border: 1px solid #dcdcdc; }
    .arrows button { flex: 1; }
    .arrows button + button { border-top: 1px solid #dcdcdc; }
    .ck { display: flex; align-items: center; gap: 4px; height: 22px; }
    .ck input { appearance: none; width: 13px; height: 13px; border: 1px solid #333; background: #fff; display: grid; place-items: center; }
    .ck.dis input { border-color: #ccc; }
    .ck input:checked::before { content: ""; width: 8px; height: 4px; border: solid #222; border-width: 0 0 1px 1px; transform: rotate(-45deg); margin-bottom: 3px; }
    .line { height: 39px; }
    .top { height: 51px; padding-top: 2px; align-items: center; }
    .line.color { height: 31px; }
    .tabs { width: 40px; padding-top: 3px; display: flex; flex-direction: column; align-items: center; }
    .tab { width: 32px; height: 32px; margin-bottom: 3px; border: 1px solid transparent; border-radius: 4px; flex: none; }
    .tab.on { border-color: #a6a6a6; background: #f5f5f5; }
    .tab.gear { margin-bottom: 7px; }
    .start { align-items: flex-start; }
    .einzug { display: flex; flex-direction: column; gap: 6px; flex: 1; padding-top: 3px; }
    .checks { width: 108px; }
  `];
  private h(t: string, launch = true) {
    return html`<h2>${chevron(180, 12, 1)}<span class="t">${t}</span>${launch ? html`<button class="launch" aria-label="${t} – Optionen"></button>` : nothing}</h2>`;
  }
  private i(name: string, label: string, size = 16, on = false) {
    return html`<button class=${classMap({ icon: true, on })} aria-label=${label}>${glyph(name, size)}</button>`;
  }
  private spin(id: string, value: string, cls: string) {
    const t = (d: string) => html`<svg width="5" height="3" viewBox="0 0 5 3"><path d=${d} fill="#444"/></svg>`;
    return html`<span class="spin ${cls}"><input id=${id} .value=${value} /><span class="arrows"><button aria-label="Erhöhen">${t("M0 3h5L2.500 0z")}</button><button aria-label="Verringern">${t("M0 0h5L2.500 3z")}</button></span></span>`;
  }
  render() {
    return html`
      <div class="split"><button class="handle" aria-label="Seitenleiste ausblenden"><svg width="4" height="8" viewBox="0 0 4 8"><path d="M0 0l4 4-4 4z" fill="#fff"/></svg></button></div>
      <div class="deck">
        <div class="title"><span class="dots"></span><span class="t">Eigenschaften</span><button aria-label="Schließen">${glyph("close", 16)}</button></div>
        <div class="body">
          <div class="panels">
            ${this.h("Vorlage", false)}
            <section class="vorlage"><div class="row">${combo("Vorlage", "Standard", "wide")}<span class="gap"></span>${this.i("fill", "Vorlage aktualisieren")}${this.i("plus", "Neue Vorlage")}</div></section>
            ${this.h("Zeichen")}
            <section class="zeichen">
              <div class="row">${combo("Schriftart", "Arial", "wide")}${combo("Schriftgröße", "8", "size")}</div>
              <div class="row top">${this.i("bold", "Fett")}${this.i("italic", "Kursiv")}${this.i("underline", "Unterstrichen")}${arrow("Unterstrichen")}${this.i("strike", "Durchgestrichen")}${this.i("shadow", "Schatten")}<span class="grow"></span>${this.i("grow", "Schrift vergrößern")}${this.i("shrink", "Schrift verkleinern")}</div>
              <div class="row line color">${this.i("fontcolor", "Schriftfarbe")}${arrow("Schriftfarbe")}<span class="grow"></span>${this.i("spacing", "Laufweite")}${arrow("Laufweite", true)}<span class="gap"></span><span class="gap"></span>${this.i("sup", "Hochgestellt")}${this.i("sub", "Tiefgestellt")}</div>
            </section>
            ${this.h("Zahlenformat")}
            <section class="zahl">
              <div class="row">${combo("Kategorie", "Datum", "tall")}<span class="gap"></span>${this.i("money", "Währung")}${arrow("Währung")}${this.i("percent", "Prozent", 14)}${this.i("number", "Zahl", 15)}</div>
              <div class="row two dis"><label for="nk">N<u>a</u>chkommastellen:</label><label class="fn" for="fn">Führende <u>N</u>ullen:</label></div>
              <div class="row two spins">${this.spin("nk", "0", "")}${this.spin("fn", "0", "n")}</div>
              <label class="ck dis"><input type="checkbox" disabled /><span><u>N</u>egative Zahlen in rot</span></label>
              <label class="ck dis"><input type="checkbox" disabled /><span><u>T</u>ausendertrennzeichen</span></label>
            </section>
            ${this.h("Ausrichtung")}
            <section>
              <div class="row line">${this.i("left", "Linksbündig", 15)}${this.i("center", "Zentriert", 15, true)}${this.i("right", "Rechtsbündig", 15)}${this.i("justify", "Blocksatz", 15)}<span class="grow"></span>${this.i("top", "Oben", 15)}${this.i("middle", "Mitte", 15, true)}${this.i("bottom", "Unten", 15)}</div>
              <div class="row start">
                <div class="einzug"><div class="row dis"><label for="ez"><u>E</u>inzug:</label><span class="gap"></span>${this.i("indent", "Einzug erhöhen", 15)}${this.i("outdent", "Einzug verringern", 15)}</div>${this.spin("ez", "0 pt", "m")}</div>
                <div class="checks"><label class="ck"><input type="checkbox" checked /><span><u>Z</u>ellen verbinden</span></label><label class="ck"><input type="checkbox" /><span>Zeilenu<u>m</u>bruch</span></label></div>
              </div>
            </section>
          </div>
          <div class="sb"><button aria-label="Nach oben">${chevron(180, 10, 2)}</button><div class="thumb"></div><div class="rest"></div><button aria-label="Nach unten">${chevron(0, 10, 2)}</button></div>
        </div>
      </div>
      <nav class="tabs" aria-label="Seitenleiste">
        <button class="tab gear" aria-label="Einstellungen">${glyph("gear")}</button>
        <button class="tab on" aria-label="Eigenschaften">${glyph("props")}</button>
        <button class="tab" aria-label="Formatvorlagen">${glyph("styles")}</button>
        <button class="tab" aria-label="Galerie">${glyph("image")}</button>
        <button class="tab" aria-label="Navigator">${glyph("compass")}</button>
        <button class="tab" aria-label="Funktionen">${glyph("fx")}</button>
      </nav>`;
  }
}

const MENU = [["", "D", "atei"], ["", "B", "earbeiten"], ["", "A", "nsicht"], ["", "E", "infügen"], ["", "F", "ormat"], ["Vo", "r", "lagen"], ["", "T", "abelle"], ["Date", "n", ""], ["E", "x", "tras"], ["Fen", "s", "ter"], ["", "H", "ilfe"]];
const TABS: [string, string][] = [["Kursheft_Liste", ""], ["Kursheft Fehltage", "lock"], ["Fehltage", "on"], ["Kursheft Thema der Stunde", ""], ["Kursheft Epo", "lock"], ["Ferien", ""], ["bewegliche Ferientage", ""], ["Klausuren", ""], ["Feiertage", ""]];

@customElement("app-root")
class AppRoot extends LitElement {
  static styles = [base, css`
    :host { display: flex; flex-direction: column; height: 100vh; overflow: hidden; background: #f0f0f0; }
    .top { background: linear-gradient(#fff, #fff 50px, #f0f0f0); border-bottom: 1px solid #a0a0a0; }
    .title { display: flex; align-items: center; height: 22px; padding: 0 2px; }
    .title .t { flex: 1; padding-top: 2px; padding-left: 5px; }
    .title button { width: 46px; height: 22px; }
    .menu { display: flex; align-items: center; height: 28px; padding: 2px 4px 0 8px; }
    .menu nav { flex: 1; display: flex; gap: 16px; }
    .menu a { color: inherit; text-decoration: none; }
    .menu .end { display: flex; gap: 5px; }
    .bar { display: flex; align-items: center; height: 39px; padding-left: 11px; }
    .bar.one { height: 38px; }
    .grip { width: 3px; height: 24px; margin-left: -8px; margin-right: 5px; background: repeating-linear-gradient(#a8a8a8 0 3px, transparent 3px 4px); flex: none; }
    .font { width: 120px; height: 24px; margin-left: 1px; } .fsize { width: 46px; height: 24px; margin: 0 7px 0 8px; }
    .mid { flex: 1; min-height: 0; display: grid; grid-template-columns: minmax(0, 1fr) 338px; grid-template-rows: minmax(0, 1fr); }
    .left { display: flex; flex-direction: column; min-width: 0; min-height: 0; }
    .formula { height: 28px; flex: none; display: flex; align-items: center; border-bottom: 1px solid #a0a0a0; padding-right: 7px; }
    .formula .name { width: 125px; height: 24px; border-left: 0; }
    .formula .fb { width: 25px; height: 24px; }
    .formula .sum { margin: 0; }
    .sep { width: 1px; height: 16px; background: #c0c0c0; margin: 0 4px; }
    .formula input { flex: 1; min-width: 0; height: 24px; border: 1px solid #9c9ca0; background: #fff; padding: 0 3px; }
    .formula .open { width: 18px; height: 23px; margin-left: 3px; background: #e1e1e1; border: 1px solid #adadad; }
    .info { height: 40px; flex: none; display: flex; align-items: center; background: #feefb3; border-bottom: 1px solid #5c4a1c; padding: 0 13px 0 10px; }
    .info .t { flex: 1; padding-left: 12px; }
    .info .act { width: 107px; height: 28px; background: #e1e1e1; border: 1px solid #adadad; margin-right: 13px; }
    .work { flex: 1; min-height: 0; display: grid; grid-template-columns: minmax(0, 1fr) 18px; grid-template-rows: minmax(0, 1fr); }
    .vs { display: flex; flex-direction: column; align-items: center; min-height: 0; }
    .vs .stub { width: 100%; height: 4px; background: #b0b0b0; display: flex; align-items: center; justify-content: center; }
    .vs .stub::before { content: ""; width: 9px; height: 1px; background: #000; }
    .vs button { height: 18px; width: 100%; flex: none; }
    .vs .thumb { width: 15px; flex: 111; background: #cdcdcd; } .vs .rest { flex: 286; }
    .hs { height: 17px; flex: none; display: flex; align-items: center; padding-right: 18px; }
    .hs button { width: 16px; height: 16px; flex: none; }
    .hs .thumb { flex: 263; height: 15px; background: #cdcdcd; } .hs .rest { flex: 710; }
    .hs .stub { width: 5px; height: 14px; border-left: 3px solid #8f8f8f; border-right: 1px solid #000; }
    .tabs { display: flex; height: 17px; flex: none; padding-right: 18px; }
    .nav { width: 17px; flex: none; }
    .nav-pad { width: 5px; flex: none; }
    .nav.add { width: 30px; }
    .strip { flex: 1; min-width: 0; overflow: hidden; display: flex; border: 1px solid #6a6a6a; border-width: 0 0 1px 1px; }
    .stab { flex: none; gap: 4px; padding: 0 14px; border: 1px solid #6a6a6a; border-left: 0; border-bottom: 0; white-space: nowrap; }
    .stab.lock { padding: 0 13px; }
    .stab.on { background: #fff; border-top-color: #fff; font-weight: 700; padding: 0 10px; }
    .forms { height: 39px; display: flex; align-items: center; padding-left: 11px; border-top: 1px solid #b5b5b5; border-bottom: 1px solid #a0a0a0; }
    .foot { margin-top: 1px; }
    .status { height: 21px; display: grid; grid-template-columns: 131px 243px 242px 165px 69px 31px 30px 29px minmax(0, 1fr) 144px 43px; align-items: stretch; }
    .status > * { display: flex; align-items: center; justify-content: center; border-right: 1px solid #b8b8b8; white-space: nowrap; margin: 2px 0 0 0; }
    .status > .first { justify-content: flex-start; padding-left: 11px; } .status > .std { justify-content: flex-start; padding-left: 9px; }
    .status > .last { border: 0; }
    .zoom { gap: 4px; }
    .zoom input { appearance: none; width: 100px; height: 11px; background: linear-gradient(#777, #777) 50% 50% / 100% 1px no-repeat, linear-gradient(#777, #777) 50% 50% / 2px 5px no-repeat; }
    .zoom input::-webkit-slider-thumb { appearance: none; width: 4px; height: 11px; background: #5a5a5a; }
    .task { height: 40px; display: flex; background: linear-gradient(90deg, #21373f, #1f333f 45%, #1c2c42 75%, #1a2640); color: #fff; }
    .start { width: 48px; }
    .find { width: 344px; display: flex; align-items: center; gap: 10px; padding-left: 11px; background: #f1f1f1; border: 1px solid #c8c8c8; }
    .find input { flex: 1; min-width: 0; border: 0; background: none; font-size: 14px; padding: 0; color: #222; }
    .find input::placeholder { color: #3c3c3c; opacity: 1; }
    .app { width: 49px; }
    .app.run { background: linear-gradient(#5b9ccf, #5b9ccf) 50% 100% / 40px 2px no-repeat; }
    .app.act { background: linear-gradient(#5b9ccf, #5b9ccf) 50% 100% / 100% 2px no-repeat #4e5f69; }
    .apps { flex: 1; display: flex; }
    .tray { display: flex; align-items: center; padding-right: 3px; }
    .tray button { width: 33px; height: 40px; }
    .clock { width: 72px; text-align: center; line-height: 19px; }
    .tray .note { border-right: 1px solid #56616e; width: 48px; padding-right: 11px; }
  `];
  private nav(label: string, d: string, c: string) {
    return html`<button class="nav" aria-label=${label}><svg width="10" height="10" viewBox="0 0 10 10"><path d=${d} fill=${c}/></svg></button>`;
  }
  render() {
    const app = (i: string, label: string, cls = "", s = 20) => html`<button class="app ${cls}" aria-label=${label}>${glyph(i, s)}</button>`;
    return html`
      <header class="top">
        <div class="title">${glyph("sheet", 16)}<span class="t">Vorlage_Kursheft_TEST.ods - LibreOffice Calc</span>
          <button aria-label="Minimieren">${glyph("min")}</button><button aria-label="Verkleinern">${glyph("restore")}</button><button aria-label="Schließen">${glyph("close")}</button></div>
        <div class="menu"><nav>${MENU.map(([a, b, c]) => html`<a href="#">${a}<u>${b}</u>${c}</a>`)}</nav>
          <span class="end"><button aria-label="Aktualisieren">${glyph("globe", 17)}</button><button aria-label="Dokument schließen">${glyph("close", 15)}</button></span></div>
        <div class="bar one"><span class="grip"></span><tool-bar .items=${STANDARD}></tool-bar></div>
        <div class="bar"><span class="grip"></span>${combo("Schriftart", "Arial", "font")}${combo("Schriftgröße", "8", "fsize")}<tool-bar .items=${FORMAT}></tool-bar></div>
      </header>
      <div class="mid">
        <main class="left">
          <div class="formula">${combo("Namenfeld", "L5", "name")}<span class="sep"></span>
            <button class="fb" aria-label="Funktionsassistent">${glyph("fx", 16)}</button><button class="fb" aria-label="Summe">${glyph("sum", 18)}</button><button class="fb" aria-label="Formel">${glyph("equals", 16)}</button><span class="sep"></span>
            <input aria-label="Eingabezeile" value="=$Nummer.$D9" /><button class="open" aria-label="Eingabezeile erweitern"><svg width="11" height="6" viewBox="0 0 11 6"><path d="M0 0h11L5.500 6z"/></svg></button></div>
          <div class="info">${glyph("shield")}<span class="t">Das automatische Aktualisieren externer Verknüpfungen ist deaktiviert.</span><button class="act">Inhalt aktivieren</button>
            <button aria-label="Leiste schließen"><svg width="16" height="16" viewBox="0 0 16 16"><path d="M3 3l10 10M13 3L3 13" stroke="#6e4a10" stroke-width="2"/></svg></button></div>
          <div class="work"><calc-sheet></calc-sheet>
            <div class="vs"><div class="stub"></div><button aria-label="Nach oben">${chevron(180, 10, 2)}</button><div class="thumb"></div><div class="rest"></div><button aria-label="Nach unten">${chevron(0, 10, 2)}</button></div></div>
          <div class="hs"><button aria-label="Nach links">${chevron(90, 10, 2)}</button><div class="thumb"></div><div class="rest"></div><button aria-label="Nach rechts">${chevron(-90, 10, 2)}</button><div class="stub"></div></div>
          <div class="tabs"><span class="nav-pad"></span>
            ${this.nav("Erste Tabelle", "M2 1h1.500v8H2zM8 1v8L4 5z", "#a0a0a0")}${this.nav("Vorherige Tabelle", "M7 1v8L3 5z", "#a0a0a0")}${this.nav("Nächste Tabelle", "M3 0v10l5-5z", "#000")}${this.nav("Letzte Tabelle", "M2 0v10l5-5zM7 0h1.500v10H7z", "#000")}
            <button class="nav add" aria-label="Tabelle hinzufügen"><svg width="9" height="9" viewBox="0 0 9 9"><path d="M3 0h3v3h3v3H6v3H3V6H0V3h3z"/></svg></button>
            <div class="strip">${TABS.map(([t, k]) => html`<button class="stab ${k}">${k === "lock" ? html`<svg width="9" height="11" viewBox="0 0 9 11"><path d="M2 5V3a2.500 2.500 0 015 0v2" fill="none" stroke="#000" stroke-width="1.500"/><path d="M.5 4.500h8V11h-8z"/><path d="M4 6.500h1.300v3H4z" fill="#fff"/></svg>` : nothing}${t}</button>`)}</div></div>
        </main>
        <side-panel></side-panel>
      </div>
      <div class="foot">
        <div class="forms"><span class="grip"></span><tool-bar .items=${FORM}></tool-bar></div>
        <footer class="status">
          <span class="first">Tabelle 3 von 11</span><span></span><span class="std">Standard</span><span>Deutsch (Deutschland)</span><span></span>
          <span><svg width="17" height="12" viewBox="0 0 17 12"><path d="M.5 3.500h8v5h-8zM11 .5h5M11 11.500h5M13.500.5v11" fill="none" stroke="#555"/></svg></span>
          <span><svg width="10" height="10" viewBox="0 0 10 10"><path d="M.5.5h7l2 2v7h-9zM2.500.5v3h4v-3M2.500 9.500v-4h5v4" fill="none" stroke="#555"/></svg></span><span></span>
          <span>Mittelwert: ; Summe: 0</span>
          <span class="zoom"><button aria-label="Verkleinern"><svg width="10" height="10" viewBox="0 0 10 10"><path d="M0 5h10" stroke="#555" stroke-width="1.500"/></svg></button><input type="range" aria-label="Zoom" min="0" max="100" value="42" /><button aria-label="Vergrößern"><svg width="10" height="10" viewBox="0 0 10 10"><path d="M0 5h10M5 0v10" stroke="#555" stroke-width="1.500"/></svg></button></span>
          <span class="last">90 %</span>
        </footer>
      </div>
      <div class="task">
        <button class="start" aria-label="Start">${glyph("win")}</button>
        <label class="find">${glyph("search", 18)}<input type="text" aria-label="Suche" placeholder="Zur Suche Text hier eingeben" /></label>
        <div class="apps">${app("tasks", "Aktive Anwendungen")}${app("explorer", "Explorer", "run")}${app("store", "Store")}${app("mail", "Mail")}${app("opera", "Opera", "run")}${app("ps", "Photoshop", "run")}${app("calc", "LibreOffice Calc", "act")}</div>
        <div class="tray"><button aria-label="Ausgeblendete Symbole">${glyph("up", 18)}</button><button aria-label="Akku">${glyph("battery")}</button><button aria-label="Netzwerk">${glyph("wifi", 18)}</button><button aria-label="Lautsprecher">${glyph("volume")}</button><button aria-label="Windows Ink">${glyph("pen")}</button>
          <div class="clock">09:04<br />18.10.2019</div><button class="note" aria-label="Benachrichtigungen">${glyph("note", 20)}</button></div>
      </div>`;
  }
}
